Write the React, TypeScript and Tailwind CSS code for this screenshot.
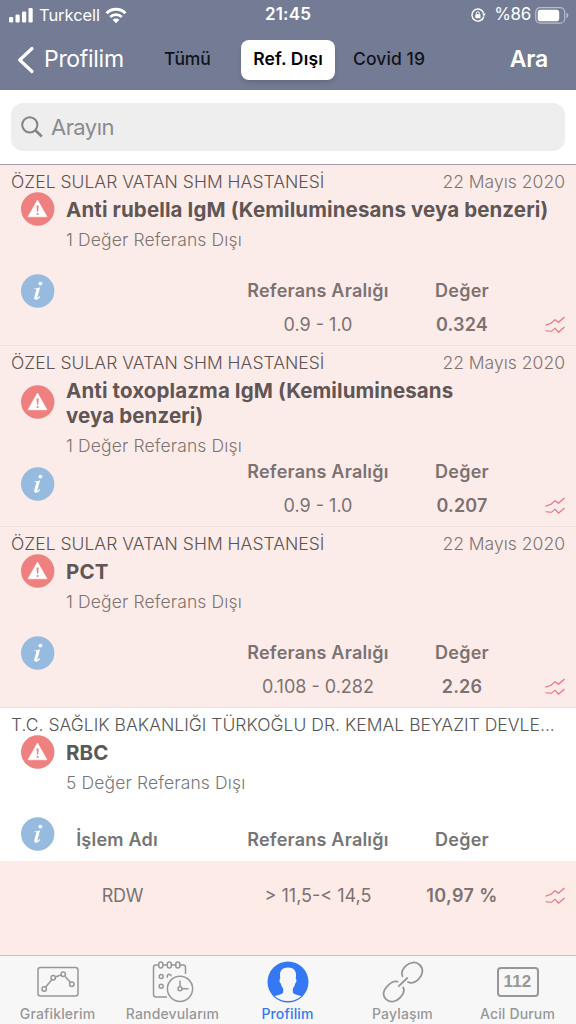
import type { ReactNode } from "react";
import clsx from "clsx";

type Result = {
  range: string;
  value: string;
};

type Report = {
  hospital: string;
  date: string;
  title: ReactNode;
  twoLines?: boolean;
  outOfRange: number;
  result: Result;
};

const reports: Report[] = [
  {
    hospital: "ÖZEL SULAR VATAN SHM HASTANESİ",
    date: "22 Mayıs 2020",
    title: "Anti rubella IgM (Kemiluminesans veya benzeri)",
    outOfRange: 1,
    result: { range: "0.9 - 1.0", value: "0.324" },
  },
  {
    hospital: "ÖZEL SULAR VATAN SHM HASTANESİ",
    date: "22 Mayıs 2020",
    title: (
      <>
        Anti toxoplazma IgM (Kemiluminesans
        <br />
        veya benzeri)
      </>
    ),
    twoLines: true,
    outOfRange: 1,
    result: { range: "0.9 - 1.0", value: "0.207" },
  },
  {
    hospital: "ÖZEL SULAR VATAN SHM HASTANESİ",
    date: "22 Mayıs 2020",
    title: "PCT",
    outOfRange: 1,
    result: { range: "0.108 - 0.282", value: "2.26" },
  },
];

const AlertIcon = () => (
  <svg width="34" height="34" viewBox="0 0 34 34">
    <circle cx="16.700" cy="17" r="16.700" fill="#ee8080" />
    <path d="M16.500 8 26 24.800H7Z" fill="#fff" stroke="#fff" strokeWidth="0.6" strokeLinejoin="round" />
    <path d="M15.500 13.600h2.200l-.5 6.200h-1.200Z" fill="#ee8080" />
    <circle cx="16.600" cy="22" r="1.100" fill="#ee8080" />
  </svg>
);

const InfoIcon = () => (
  <svg width="34" height="34" viewBox="0 0 34 34">
    <circle cx="16.700" cy="17" r="16.700" fill="#97bbdf" />
    <circle cx="19.400" cy="9.600" r="1.900" fill="#fff" />
    <path
      d="M13.200 14.600c2.200-.2 4-.7 5.900-1.400l-2.700 9.700c-.3 1.100.5 1.300 2.300-.8l.7.5c-1.500 2.300-2.900 3.200-4.300 3.200-1.600 0-2.200-1.200-1.800-2.700l2-7.100c.2-.7-.1-.9-2.100-.9Z"
      fill="#fff"
    />
  </svg>
);

const TrendIcon = () => (
  <svg width="22" height="18" viewBox="0 0 22 18" fill="none" stroke="#ea6b78" strokeWidth="1.100">
    <path d="M1.500 9.300 7 7.200 11 3.700 14.500 6.200 20.500 1" />
    <path d="M1.500 14.800 7.500 15.300 11 12.200 14.500 16.200 20.500 11" />
  </svg>
);

const StatusBar = () => (
  <div className="grid h-[30px] grid-cols-3 items-center text-white">
    <div className="flex items-center pl-[9px]">
      <svg width="24" height="16" viewBox="0 0 24 16" fill="#fff">
        <rect x="0" y="10" width="4.200" height="5.500" rx="1.200" />
        <rect x="6.500" y="7.500" width="4.200" height="8" rx="1.200" />
        <rect x="13" y="4.500" width="4.200" height="11" rx="1.200" />
        <rect x="19.500" y="1" width="4.200" height="14.500" rx="1.200" />
      </svg>
      <span className="ml-[6px] text-[16.500px] tracking-[-0.050px]">Turkcell</span>
      <svg className="ml-[5px]" width="22" height="17" viewBox="0 0 22 17" fill="none" stroke="#fff" strokeWidth="2.800">
        <path d="M1.500 6.200a13.400 13.400 0 0 1 19 0" />
        <path d="M5.200 10a8.200 8.200 0 0 1 11.600 0" />
        <path d="M11 16.200 7.600 12.800a4.800 4.800 0 0 1 6.800 0Z" fill="#fff" stroke="none" />
      </svg>
    </div>
    <div className="text-center text-[17px] font-semibold tracking-[0.200px]">21:45</div>
    <div className="flex items-center justify-end pr-[7px]">
      <svg width="15" height="14" viewBox="0 0 15 14" fill="none" stroke="#fff" strokeWidth="1.400">
        <path d="M12.600 5A6 6 0 1 0 12.800 8.500" />
        <path d="M11 5.600h3.800L13 8.600Z" fill="#fff" stroke="none" />
        <rect x="4.300" y="6.200" width="5.200" height="4" rx=".6" fill="#fff" stroke="none" />
        <path d="M5.400 6.500V5.200a1.500 1.500 0 0 1 3 0v1.300" strokeWidth="1" />
      </svg>
      <span className="ml-[8px] text-[17px] tracking-[-0.300px]">%86</span>
      <svg className="ml-[4px]" width="34" height="17" viewBox="0 0 34 17">
        <rect x=".7" y=".7" width="29" height="15.500" rx="4.500" fill="none" stroke="#fff" strokeOpacity=".5" strokeWidth="1.200" />
        <rect x="2.700" y="2.700" width="21.500" height="11.500" rx="2.800" fill="#fff" />
        <path d="M31.500 5.800c2.400.9 2.400 4.500 0 5.400Z" fill="#fff" fillOpacity=".5" />
      </svg>
    </div>
  </div>
);

const NavBar = () => (
  <div className="flex h-[59px] items-center">
    <svg className="ml-[17px]" width="18" height="28" viewBox="0 0 18 28" fill="none" stroke="#fff" strokeWidth="3.200" strokeLinecap="round" strokeLinejoin="round">
      <path d="M15 2.500 2.700 14 15 25.500" />
    </svg>
    <span className="ml-[9px] w-[105px] text-[23px] tracking-[-0.300px] text-white">Profilim</span>
    <span className="ml-[15px] w-[46px] text-[17.500px] font-medium tracking-[-0.150px] text-[#11131b]">Tümü</span>
    <div className="ml-[31px] flex h-10 w-[94px] items-center justify-center rounded-[8px] bg-white text-[17.500px] font-semibold tracking-[0.150px] whitespace-nowrap text-black shadow-md">
      Ref. Dışı
    </div>
    <span className="ml-[18px] w-[80px] text-[17.500px] font-medium tracking-[0.100px] whitespace-nowrap text-[#11131b]">Covid 19</span>
    <span className="ml-auto pr-[28px] text-[23px] font-semibold tracking-[-0.200px] text-white">Ara</span>
  </div>
);

const SearchBar = () => (
  <div className="h-[75px] border-b border-[#a39aa8] bg-white px-[11px] pt-[13px]">
    <div className="flex h-[48px] items-center rounded-[12px] bg-[#eeeeee] pl-[10px]">
      <svg width="22" height="22" viewBox="0 0 22 22" fill="none" stroke="#848487" strokeWidth="2">
        <circle cx="8.800" cy="8.800" r="7.600" />
        <path d="M14.300 14.300 20.800 20.500" strokeWidth="2.600" />
      </svg>
      <span className="ml-[8px] text-[22px] tracking-[-0.550px] text-[#8b8b8e]">Arayın</span>
    </div>
  </div>
);

type ReportCardProps = {
  report: Report;
};

const cardHeader = "flex h-[27px] items-end justify-between pr-[11px] pl-[11px] text-[17.500px] leading-[21px] font-light tracking-[0.020px]";
const cardTitle = "text-[20.500px] leading-[25px] font-bold tracking-[0.110px] whitespace-nowrap";
const cardSubtitle = "mt-[5px] text-[17.500px] leading-[25px] font-light tracking-[0.130px]";
const columns = "grid grid-cols-[168px_168px_120px_54px] items-center text-center";
const columnTitles = "text-[18px] font-semibold tracking-[0.220px] whitespace-nowrap";

const ReportCard = ({ report }: ReportCardProps) => {
  const { hospital, date, title, twoLines, outOfRange, result } = report;
  return (
    <section className="flex h-[181px] flex-col border-b border-[#efdfdd] bg-[#fcece9]">
      <div className={cardHeader}>
        <span className="text-[#5d5352]">{hospital}</span>
        <span className="text-[#7d7371]">{date}</span>
      </div>
      <div className="flex flex-1">
        {/* Icons */}
        <div className={clsx("ml-[21px] flex w-[45px] flex-col gap-[48px]", twoLines && "mt-[12px]")}>
          <AlertIcon />
          <InfoIcon />
        </div>
        <div className="flex flex-1 flex-col pt-[5px]">
          <h3 className={clsx(cardTitle, "text-[#5f5655]")}>{title}</h3>
          <p className={clsx(cardSubtitle, "text-[#7d7371]")}>{outOfRange} Değer Referans Dışı</p>
          {/* Values */}
          <div className={clsx(columns, columnTitles, "mt-auto h-[25px] text-[#7b7271]")}>
            <span />
            <span>Referans Aralığı</span>
            <span>Değer</span>
          </div>
          <div className={clsx(columns, "h-[43px] pt-[2px] text-[18px] text-[#7b7271]")}>
            <span />
            <span>{result.range}</span>
            <span className="font-semibold tracking-[0.200px]">{result.value}</span>
            <span className="pl-[22px]"><TrendIcon /></span>
          </div>
        </div>
      </div>
    </section>
  );
};

const OpenReport = () => (
  <section className="flex flex-1 flex-col">
    <div className="h-[153px] bg-white">
      <div className={cardHeader}>
        <span className="whitespace-nowrap text-[#565656]">T.C. SAĞLIK BAKANLIĞI TÜRKOĞLU DR. KEMAL BEYAZIT DEVLE...</span>
      </div>
      <div className="flex h-[126px]">
        <div className="ml-[21px] flex w-[45px] flex-col gap-[48px]">
          <AlertIcon />
          <InfoIcon />
        </div>
        <div className="flex flex-1 flex-col pt-[5px]">
          <h3 className={clsx(cardTitle, "text-[#595959]")}>RBC</h3>
          <p className={clsx(cardSubtitle, "text-[#777777]")}>5 Değer Referans Dışı</p>
          <div className={clsx(columns, columnTitles, "mt-auto h-[43px] text-[#757575]")}>
            <span className="pr-[66px]">İşlem Adı</span>
            <span>Referans Aralığı</span>
            <span>Değer</span>
          </div>
        </div>
      </div>
    </div>
    <div className="flex-1 bg-[#fdebe8] pl-[66px]">
      <div className={clsx(columns, "h-[69px] text-[18px] text-[#7b7271]")}>
        <span className="pr-[55px] tracking-[-0.300px]">RDW</span>
        <span>&gt; 11,5-&lt; 14,5</span>
        <span className="font-semibold tracking-[0.400px]">10,97 %</span>
        <span className="pl-[22px]"><TrendIcon /></span>
      </div>
    </div>
  </section>
);

const ChartTab = () => (
  <svg width="42" height="42" viewBox="0 0 42 42" fill="none" stroke="currentColor" strokeWidth="1.500">
    <rect x="1" y="6.500" width="40" height="28.500" rx="2.500" />
    <path d="M8.600 26.200 14.900 18.600M18.400 16 23.800 14M28.200 15.400 33.400 21.400" />
    <circle cx="7.200" cy="28" r="2.200" />
    <circle cx="16.200" cy="16.800" r="2.200" />
    <circle cx="26.200" cy="13.200" r="2.200" />
    <circle cx="34.800" cy="23.200" r="2.200" />
  </svg>
);

const CalendarTab = () => (
  <svg width="42" height="42" viewBox="0 0 42 42" fill="none" stroke="currentColor" strokeWidth="1.500">
    <path d="M6.500 4H4a2.500 2.500 0 0 0-2.500 2.500V33.500A2.500 2.500 0 0 0 4 36H15M11 4h4M19.500 4h4M28 4h3a2.500 2.500 0 0 1 2.500 2.500V13" />
    <rect x="6.800" y="1" width="4" height="6" rx="2" />
    <rect x="15.300" y="1" width="4" height="6" rx="2" />
    <rect x="23.800" y="1" width="4" height="6" rx="2" />
    <circle cx="9.200" cy="15.500" r="2" />
    <circle cx="9.200" cy="25.300" r="2" />
    <path d="M15.700 16.700a2 2 0 1 1 3.500-1.500" />
    <circle cx="28" cy="27.800" r="12.600" />
    <circle cx="28" cy="27.800" r="2" />
    <path d="M28 25.800V19.500M30 27.800H36.500" />
  </svg>
);

const ProfileTab = () => (
  <svg width="42" height="42" viewBox="0 0 42 42">
    <circle cx="21" cy="21" r="20.500" fill="currentColor" />
    <path
      d="M21 6.500c5.600 0 8.400 3.200 8 8.300-.1 1-.2 2.200-.2 3.100 1.200.2.700 4.200-.7 4.700-.4 2.300-1.200 3.800-2.300 5v3.600c.5 2.300 6.200 2.700 8.400 4A19 19 0 0 1 21 40a19 19 0 0 1-13.200-4.800c2.200-1.300 7.900-1.700 8.400-4v-3.600c-1.100-1.200-1.900-2.700-2.300-5-1.400-.5-1.900-4.500-.7-4.700 0-.9-.1-2.100-.2-3.100-.4-5.100 2.400-8.300 8-8.300Z"
      fill="#f7f7f7"
    />
  </svg>
);

const LinkTab = () => (
  <svg width="42" height="42" viewBox="0 0 42 42" fill="none" stroke="currentColor" strokeWidth="1.800" strokeLinecap="round">
    <path d="M20.500 15.200C18.800 11.500 20.200 8.500 23.500 5.200C27.500 1.200 33.500-.2 37.800 4C42 8.200 40.600 14 36.800 17.800C33.200 21.400 29.500 23 26 21" />
    <path d="M15.600 20.600C12.200 19.600 9 21.300 5.600 24.800C1.500 28.800-.2 34.200 3.900 38.200C8 42.200 13.800 41 17.700 37C21.200 33.500 23 29.800 21.200 26.500" />
    <path d="M16.800 25.200 25.300 17" />
  </svg>
);

const EmergencyTab = () => (
  <div className="my-[6px] flex h-[30px] w-[42px] items-center justify-center rounded-[4px] border-2 border-current font-['Liberation_Sans',sans-serif] text-[17px] font-bold">
    112
  </div>
);

const tabs = [
  { label: "Grafiklerim", icon: <ChartTab /> },
  { label: "Randevularım", icon: <CalendarTab /> },
  { label: "Profilim", icon: <ProfileTab />, active: true },
  { label: "Paylaşım", icon: <LinkTab /> },
  { label: "Acil Durum", icon: <EmergencyTab /> },
];

const TabBar = () => (
  <nav className="grid h-[69px] grid-cols-5 border-t border-[#cfbcbb] bg-[#f7f7f7] pr-px">
    {tabs.map((tab) => (
      <div
        key={tab.label}
        className={clsx(
          "flex flex-col items-center pt-[5px] text-[14px] font-medium tracking-[0.150px]",
          tab.active ? "text-[#3478f6]" : "text-[#979797]"
        )}
      >
        {tab.icon}
        <span className="mt-[2px] leading-[18px]">{tab.label}</span>
      </div>
    ))}
  </nav>
);

export default function App() {
  return (
    <div className="flex h-[1024px] w-[576px] flex-col overflow-hidden bg-white font-['Inter',sans-serif]">
      <header className="h-[90px] bg-[#747b94]">
        <StatusBar />
        <NavBar />
      </header>
      <SearchBar />
      {reports.map((report, i) => (
        <ReportCard key={i} report={report} />
      ))}
      <OpenReport />
      <TabBar />
    </div>
  );
}
